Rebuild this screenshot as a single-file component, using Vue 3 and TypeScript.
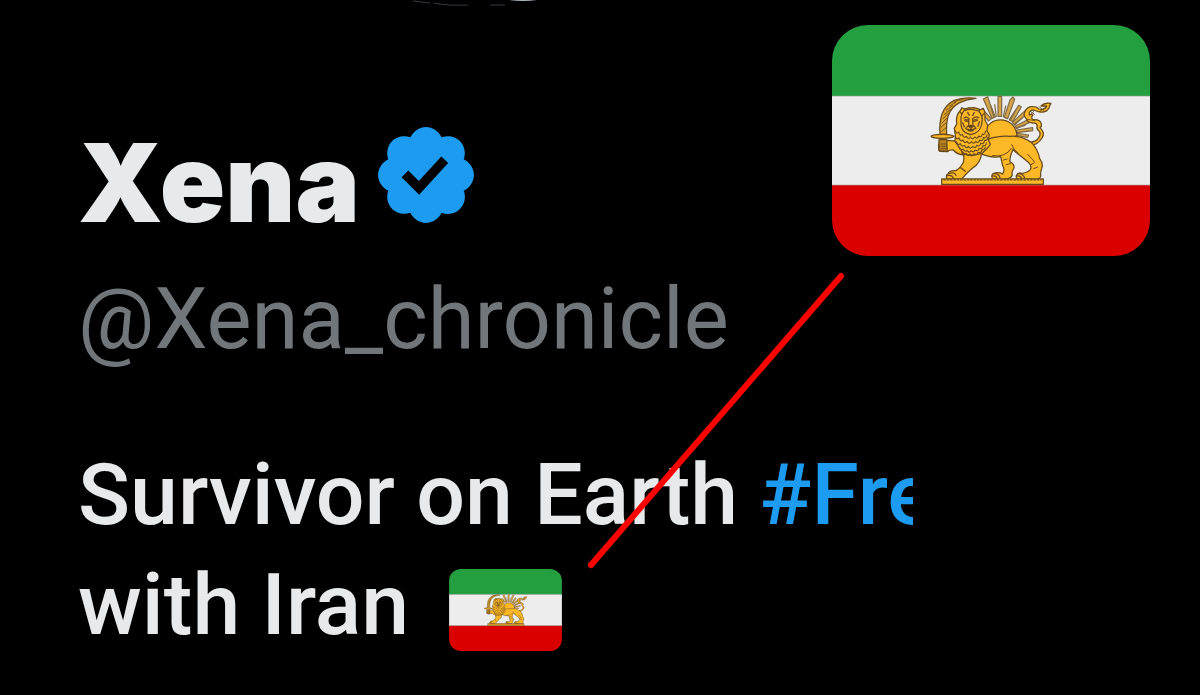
<script setup lang="ts">
interface Profile {
  name: string
  handle: string
  hashtag: string
}

const profile: Profile = {
  name: 'Xena',
  handle: '@Xena_chronicle',
  hashtag: '#Fre',
}

const rays: string[] = [
  'M205 108 L184 82 L191 76 L214 101 Z',
  'M216 100 L190 42 L203 35 L210 56 L226 96 Z',
  'M234 94 L234 34 L245 34 L245 94 Z',
  'M253 97 L270 45 L279 36 L284 43 L263 101 Z',
  'M268 104 L296 61 L304 66 L278 110 Z',
  'M277 112 L318 75 L325 82 L284 120 Z',
  'M286 123 L331 101 L334 110 L289 131 Z',
  'M290 135 L338 128 L338 137 L291 143 Z',
  'M290 145 L326 150 L323 157 L288 151 Z',
]

const maneRows: string[] = [
  'M105 136 q5 13 11 5 q4 14 11 7 q5 13 12 6 q6 12 12 2 q7 11 13 0 q8 9 12 -3 q9 7 11 -6 q8 4 10 -9',
  'M105 153 q5 13 12 6 q5 13 12 6 q5 13 12 4 q7 12 13 1 q8 10 13 -1 q9 8 12 -4 q9 6 11 -7 q9 3 11 -9',
  'M109 170 q5 13 12 6 q5 12 12 5 q6 12 12 3 q7 11 13 0 q9 8 12 -3 q9 6 12 -6 q9 4 12 -9 q8 2 9 -8',
  'M117 187 q5 12 12 5 q6 11 12 4 q7 10 12 1 q8 8 12 -2 q10 6 12 -5 q10 4 12 -8 q9 2 10 -8',
  'M127 201 q5 10 11 4 q6 10 12 2 q8 8 12 -1 q9 7 12 -4 q10 4 12 -8 q8 2 10 -8',
]
</script>

<template>
  <main class="page">
    <svg class="defs" aria-hidden="true">
      <symbol id="lion-flag" viewBox="0 0 318 231">
        <rect y="71" width="318" height="89" fill="#ededed" />
        <rect width="318" height="71" fill="#249f40" />
        <rect y="160" width="318" height="71" fill="#da0000" />
        <path d="M0 71.2h318M0 160h318" stroke="#a8a8a8" stroke-width="1" opacity=".6" />
        <g
          transform="translate(88 60) scale(.3333)"
          fill="#fcb827"
          stroke="#674a1c"
          stroke-width="3.8"
          stroke-linejoin="round"
          stroke-linecap="round"
        >
          <g fill="#d5a548" stroke="#806b45" stroke-width="3.6">
            <path v-for="ray in rays" :key="ray" :d="ray" />
            <path d="M222 97 L212 63M229 94 L224 59M250 95 L257 63M271 106 L286 78M283 117 L307 99M290 128 L315 121" fill="none" />
          </g>
          <path d="M196 147 C198 91 284 88 291 151 L273 163 L202 161 Z" />
          <path
            d="M326 172 Q349 172 357 157 Q364 145 356 137 Q348 130 352 122 Q349 113 338 114 Q322 113 319 101 Q308 91 315 80 Q322 60 348 66 L357 72 Q376 76 380 63 L363 63 Q374 52 393 55 Q389 61 387 69 Q379 84 358 81 L341 75 Q325 76 328 89 Q336 86 339 91 Q331 96 339 104 Q363 103 364 118 Q366 125 360 128 Q377 144 366 159 Q354 179 332 181 Z"
          />
          <path d="M331 79 L343 88M329 91 L341 80M321 103 L345 107M358 65 L370 77M358 80 L377 67" fill="none" stroke-width="2.6" />

          <path d="M60 148 Q57 116 66 87 Q77 58 103 46 Q132 35 168 40 Q140 43 119 53 Q94 65 85 92 Q78 113 80 148 Z" fill="#dca12c" />
          <path
            d="M65 139 L78 128 M64 126 L79 113 M66 114 L81 100 M69 101 L85 86 M73 89 L91 74 M79 76 L98 62 M89 63 L107 52 M102 52 L120 43 M119 46 L137 40"
            fill="none"
            stroke-width="2.6"
          />

          <path d="M181 172 Q226 150 270 154 Q308 151 337 175 Q355 196 359 221 Q371 236 365 251 Q361 260 362 274 Q359 284 340 283 L292 283 Q283 270 298 264 Q317 268 331 254 Q337 243 325 232 L302 213 Q286 202 279 193 Q268 218 270 231 Q284 237 282 249 Q273 263 277 271 Q272 283 247 283 L221 284 Q211 275 219 266 Q235 260 248 267 Q256 254 248 242 L242 215 Q207 220 178 203 Z" />
          <path d="M126 190 Q135 212 130 232 Q122 249 108 257 Q86 256 84 267 Q76 270 81 282 L124 283 Q143 261 158 249 Q181 235 185 205 Z" />
          <path d="M87 266 Q105 260 108 271 M81 272 Q97 269 100 280 M122 248 L136 259 M221 266 Q236 264 240 278 M218 273 Q229 271 231 281 M293 266 Q309 264 314 279 M290 273 Q302 271 305 281" fill="none" />
          <path d="M218 212 Q257 218 274 190 M275 179 Q280 193 295 205 M323 208 Q335 219 344 232 M251 225 L261 222M259 239 L271 236M331 240 L342 234M341 251 L353 246" fill="none" stroke-width="3" />

          <path d="M119 168 Q102 168 80 166 L58 173 Q53 184 59 199 L83 200 Q88 194 100 195 Q110 207 128 210 Z" />
          <path d="M57 164 L80 163 L82 199 L57 197 Z" fill="#b98222" />
          <path d="M63 177H80M63 184H80M63 191H80" fill="none" stroke-width="2.6" />
          <ellipse cx="67" cy="154" rx="34" ry="6" />

          <path d="M116 82 Q106 100 111 115 L103 130 L106 151 L105 169 L116 185 L128 203 L140 210 L154 212 L170 209 L187 204 L202 190 L211 178 L205 164 L208 149 L201 138 L203 120 L195 105 L195 88 L181 74 L163 68 L144 69 L129 73 Z" />
          <path v-for="row in maneRows" :key="row" :d="row" fill="none" stroke-width="3.4" />
          <path d="M126 87 L119 80 L126 68 L139 76 M177 76 L190 70 L195 83 L186 92" />
          <path d="M132 77 Q153 69 176 78 Q191 94 185 117 Q181 139 164 145 L151 149 L136 143 Q121 132 123 108 Q121 91 132 77 Z" />
          <path d="M132 99 Q140 92 147 102 M158 102 Q165 92 176 98 M134 107 L145 110 M161 109 L172 106 M147 101 L146 122 L139 127 M158 101 L159 121 L166 127 M146 123 Q153 128 159 123 M137 131 Q151 138 168 130 M144 136 Q152 141 160 136 M128 113 L133 126 M178 110 L174 124 M143 82 L148 91 M163 82 L158 91" fill="none" />
          <path d="M145 123 Q152 120 160 123 L153 130 Z M135 104 L145 105 M162 105 L172 102" fill="#674a1c" />

          <rect x="65" y="282" width="305" height="16" />
          <path d="M72 285H363" fill="none" stroke-dasharray="4 6" />
        </g>
      </symbol>
    </svg>

    <svg class="wisps" viewBox="0 0 140 8" aria-hidden="true">
      <path d="M3 1 L20 3 M24 3 Q38 6 58 5 M80 5 H95" fill="none" stroke="#333b40" stroke-width="1" />
      <path d="M99 0 H127 Q113 2 99 0" fill="#a8bac3" />
    </svg>

    <header class="header">
      <div class="identity">
        <h1 class="name">
          {{ profile.name }}
          <svg class="badge" viewBox="1.6 1.6 18.8 18.8" role="img" aria-label="Verified account">
            <path
              fill="#1d9bf0"
              d="M20.396 11c-.018-.646-.215-1.275-.57-1.816-.354-.54-.852-.972-1.438-1.246.223-.607.27-1.264.14-1.897-.131-.634-.437-1.218-.882-1.687-.47-.445-1.053-.75-1.687-.882-.633-.13-1.29-.083-1.897.14-.273-.587-.704-1.086-1.245-1.44S11.647 1.62 11 1.604c-.646.017-1.273.213-1.813.568s-.969.854-1.24 1.44c-.608-.223-1.267-.272-1.902-.14-.635.13-1.22.436-1.69.882-.445.47-.749 1.055-.878 1.688-.13.633-.08 1.29.144 1.896-.587.274-1.087.705-1.443 1.245-.356.54-.555 1.17-.574 1.817.02.647.218 1.276.574 1.817.356.54.856.972 1.443 1.245-.224.606-.274 1.263-.144 1.896.13.634.433 1.218.877 1.688.47.443 1.054.747 1.687.878.633.132 1.29.084 1.897-.136.274.586.705 1.084 1.246 1.439.54.354 1.17.551 1.816.569.647-.016 1.276-.213 1.817-.567s.972-.854 1.245-1.44c.604.239 1.266.296 1.903.164.636-.132 1.22-.447 1.68-.907.46-.46.776-1.044.908-1.681s.075-1.299-.165-1.903c.586-.274 1.084-.705 1.439-1.246.354-.54.551-1.17.569-1.816zM9.662 14.85l-3.429-3.428 1.293-1.302 2.072 2.072 4.4-4.794 1.347 1.246z"
            />
          </svg>
        </h1>
        <p class="handle">{{ profile.handle }}</p>
      </div>
      <svg class="flag-large" viewBox="0 0 318 231" role="img" aria-label="Lion and Sun flag, enlarged">
        <use href="#lion-flag" />
      </svg>
    </header>

    <section class="bio">
      <p class="bio-line">Survivor on Earth <a class="hashtag" href="#">{{ profile.hashtag }}</a></p>
      <p class="bio-line second">
        with Iran
        <svg class="flag-small" viewBox="0 0 318 231" role="img" aria-label="Lion and Sun flag">
          <use href="#lion-flag" />
        </svg>
      </p>
    </section>

    <svg class="pointer" viewBox="0 0 258 300" aria-hidden="true">
      <path d="M253 6 L3 295" fill="none" stroke="#ff0000" stroke-width="6" stroke-linecap="round" />
    </svg>
  </main>
</template>

<style>
body {
  margin: 0;
  background: #000;
}
</style>

<style scoped>
.page {
  position: relative;
  box-sizing: border-box;
  min-height: 100vh;
  padding: 25px 50px 32px 78px;
  overflow: hidden;
  background: #000;
  color: #e7e9ea;
  font-family: Roboto, "Liberation Sans", sans-serif;
}

.defs {
  position: absolute;
  width: 0;
  height: 0;
}

.wisps {
  position: absolute;
  top: 0;
  left: 410px;
  width: 140px;
  height: 8px;
}

.header {
  display: flex;
  align-items: flex-start;
  justify-content: space-between;
}

.identity {
  padding-top: 93px;
}

.name {
  display: flex;
  align-items: center;
  gap: 18px;
  margin: 0 0 16px;
  font-family: Inter, "Liberation Sans", sans-serif;
  font-size: 108px;
  font-weight: 900;
  line-height: 130px;
}

.badge {
  width: 96px;
  height: 96px;
  margin-bottom: 16px;
}

.handle {
  margin: 0;
  color: #71767b;
  font-size: 85px;
  line-height: 110px;
}

.flag-large {
  flex: none;
  width: 318px;
  height: 231px;
  border-radius: 36px;
}

.bio {
  max-width: 835px;
  margin-top: 66px;
  overflow: hidden;
}

.bio-line {
  margin: 0;
  font-size: 86px;
  font-weight: 500;
  line-height: 110px;
  white-space: nowrap;
}

.second {
  display: flex;
  align-items: center;
  gap: 40px;
}

.hashtag {
  color: #1d9bf0;
  text-decoration: none;
}

.flag-small {
  flex: none;
  width: 113px;
  height: 82px;
  margin-top: 10px;
  border-radius: 12px;
}

.pointer {
  position: absolute;
  top: 270px;
  left: 588px;
  width: 258px;
  height: 300px;
  pointer-events: none;
}
</style>
